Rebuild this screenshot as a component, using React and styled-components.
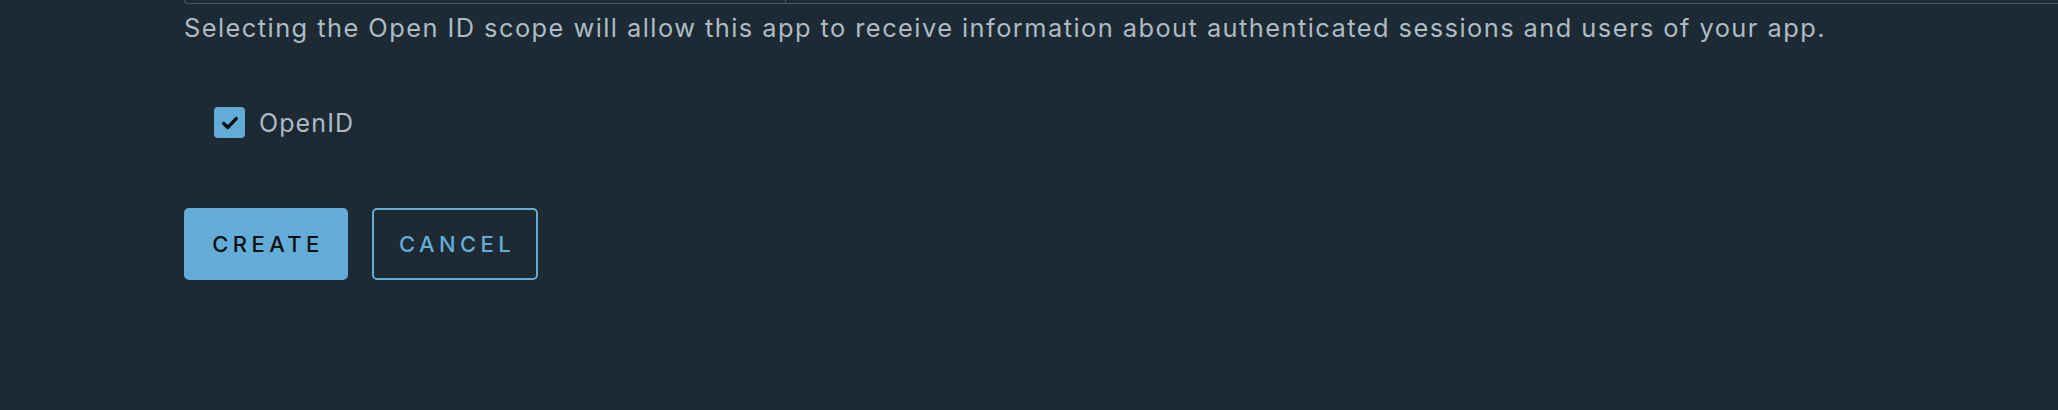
import React, { useState } from "react";
import styled, { createGlobalStyle } from "styled-components";

const Global = createGlobalStyle`
  html, body { margin: 0; padding: 0; background: #1d2a33; }
  body { font-family: "Inter", "Liberation Sans", sans-serif; overflow: hidden; }
`;

const Page = styled.div`
  width: 2058px;
  height: 410px;
  background: #1d2a33;
  overflow: hidden;
  padding-left: 184px;
  box-sizing: border-box;
`;

const FieldBottom = styled.div`
  display: flex;
  height: 3px;
  margin-right: -20px;
  border: 1px solid #4a5966;
  border-top: none;
  border-radius: 0 0 5px 5px;
`;

const FieldCell = styled.div`
  width: ${(p) => p.$w || "auto"};
  flex: ${(p) => (p.$w ? "none" : "1")};
  border-right: ${(p) => (p.$divider ? "1px solid #4a5966" : "none")};
`;

const Description = styled.p`
  margin: 6px 0 0;
  font-size: 25.4px;
  line-height: 36px;
  letter-spacing: 1.45px;
  color: #adbbc4;
  white-space: nowrap;
`;

const CheckRow = styled.label`
  display: flex;
  align-items: center;
  gap: 14px;
  height: 31px;
  margin: 61px 0 0 30px;
  color: #adbbc4;
  font-size: 25px;
  letter-spacing: 1.1px;
  cursor: pointer;
`;

const Box = styled.span`
  width: 31px;
  height: 31px;
  border-radius: 4px;
  background: #63acd7;
  display: flex;
  align-items: center;
  justify-content: center;
`;

const Actions = styled.div`
  display: flex;
  gap: 24px;
  margin-top: 70px;
`;

const Button = styled.button`
  height: 72px;
  width: ${(p) => (p.$primary ? 164 : 166)}px;
  box-sizing: border-box;
  padding: 0 0 0 4px;
  border-radius: 5px;
  border: 2px solid #63acd7;
  background: ${(p) => (p.$primary ? "#63acd7" : "transparent")};
  color: ${(p) => (p.$primary ? "#0b0f12" : "#63acd7")};
  font-family: "Inter", "Liberation Sans", sans-serif;
  font-size: 22px;
  font-weight: 500;
  letter-spacing: 4.4px;
  text-transform: uppercase;
  cursor: pointer;
`;

export default function App() {
  const [checked, setChecked] = useState(true);
  return (
    <Page>
      <Global />
      <FieldBottom>
        <FieldCell $w="600px" $divider />
        <FieldCell />
      </FieldBottom>
      <Description>
        Selecting the Open ID scope will allow this app to receive information about authenticated sessions and users of your app.
      </Description>
      <CheckRow onClick={() => setChecked(!checked)}>
        <Box>
          {checked && (
            <svg width="20" height="20" viewBox="0 0 20 20">
              <path d="M3.6 10.4 L7.9 14.4 L16.2 5.6" fill="none" stroke="#0b0f12" strokeWidth="3.4" strokeLinecap="round" strokeLinejoin="round" />
            </svg>
          )}
        </Box>
        OpenID
      </CheckRow>
      <Actions>
        <Button $primary>Create</Button>
        <Button>Cancel</Button>
      </Actions>
    </Page>
  );
}
